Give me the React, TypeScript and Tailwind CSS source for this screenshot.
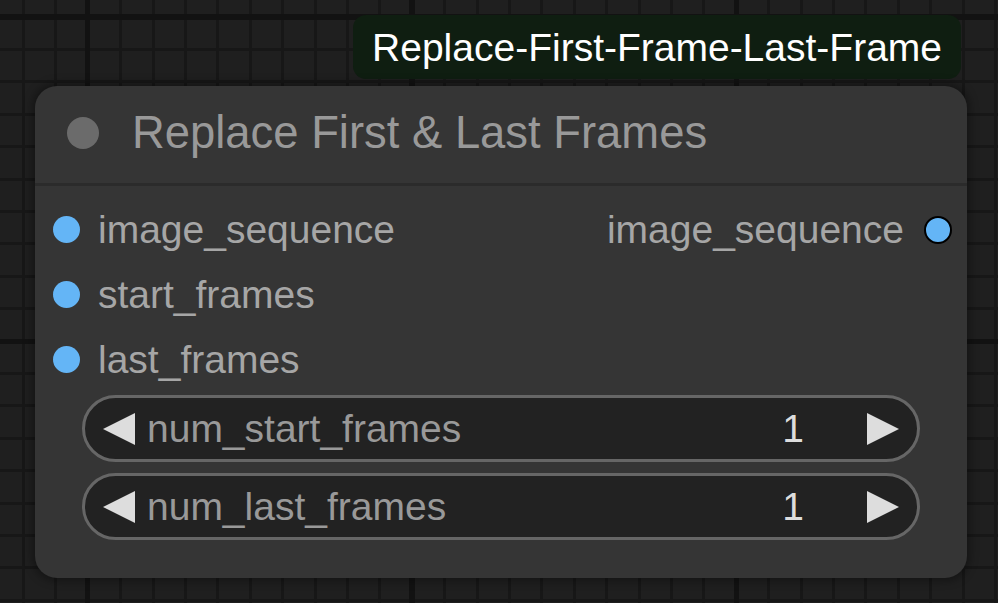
import React from "react";

const font = "font-['Liberation_Sans',Arial,sans-serif]";

const Slot: React.FC<{ label: string }> = ({ label }) => (
  <div className="flex h-[65px] items-center">
    <div className="ml-[18px] h-[27px] w-[27px] rounded-full bg-[#64b5f6]" />
    <span className="ml-[18px] text-[39px] leading-none text-[#a6a6a6]">{label}</span>
  </div>
);

const Arrow: React.FC<{ dir: "left" | "right" }> = ({ dir }) => (
  <svg width="32" height="32" viewBox="0 0 32 32" className="shrink-0">
    <polygon points={dir === "left" ? "32,0 0,16 32,32" : "0,0 32,16 0,32"} fill="#dddddd" />
  </svg>
);

const NumberWidget: React.FC<{ label: string; value: string }> = ({ label, value }) => (
  <div className="flex h-[67px] items-center rounded-full border-[3px] border-[#666] bg-[#222] pl-[18px] pr-[18px]">
    <Arrow dir="left" />
    <span className="ml-[12px] flex-1 text-[39px] leading-none text-[#999]">{label}</span>
    <span className="mr-[63px] text-[39px] leading-none text-[#dddddd]">{value}</span>
    <Arrow dir="right" />
  </div>
);

export default function App() {
  return (
    <div
      className={`${font} h-[603px] w-[998px] overflow-hidden bg-[#1f1f1f] bg-[repeating-linear-gradient(90deg,transparent_0_85.5px,#121212_85.5px_90.5px,transparent_90.5px_324px),repeating-linear-gradient(180deg,transparent_0_14.5px,#121212_14.5px_19.5px,transparent_19.5px_324px),repeating-linear-gradient(90deg,transparent_0_22px,#171717_22px_25px,transparent_25px_32.4px),repeating-linear-gradient(180deg,transparent_0_15.5px,#171717_15.5px_18.5px,transparent_18.5px_32.4px)] pl-[35px] pt-[15px]`}
    >
      <div className="flex w-[932px] flex-col">
        {/* node badge */}
        <div className="mr-[6px] flex h-[64px] items-center self-end rounded-[13px] bg-[#0f1e11] px-[19px] text-[39px] leading-none text-white">
          Replace-First-Frame-Last-Frame
        </div>

        <div className="mt-[7px] h-[492px] rounded-[22px] bg-[#353535] shadow-[0_0_8px_3px_rgba(0,0,0,0.35)]">
          <div className="flex h-[100px] items-center border-b-[3px] border-[#2b2b2b] pb-[3px]">
            <div className="ml-[32px] h-[32px] w-[32px] rounded-full bg-[#6b6b6b]" />
            <span className="ml-[33px] text-[45.4px] leading-none text-[#999]">Replace First &amp; Last Frames</span>
          </div>

          <div className="pt-[11px]">
            <div className="flex h-[65px] items-center">
              <div className="ml-[18px] h-[27px] w-[27px] rounded-full bg-[#64b5f6]" />
              <span className="ml-[18px] text-[39px] leading-none text-[#a6a6a6]">image_sequence</span>
              <span className="ml-auto text-[39px] leading-none text-[#a6a6a6]">image_sequence</span>
              <div className="ml-[20px] mr-[15px] h-[28px] w-[28px] rounded-full border-[2.5px] border-black bg-[#64b5f6]" />
            </div>
            <Slot label="start_frames" />
            <Slot label="last_frames" />

            <div className="mt-[3px] flex flex-col gap-[11px] px-[47px]">
              <NumberWidget label="num_start_frames" value="1" />
              <NumberWidget label="num_last_frames" value="1" />
            </div>
          </div>
        </div>
      </div>
    </div>
  );
}
